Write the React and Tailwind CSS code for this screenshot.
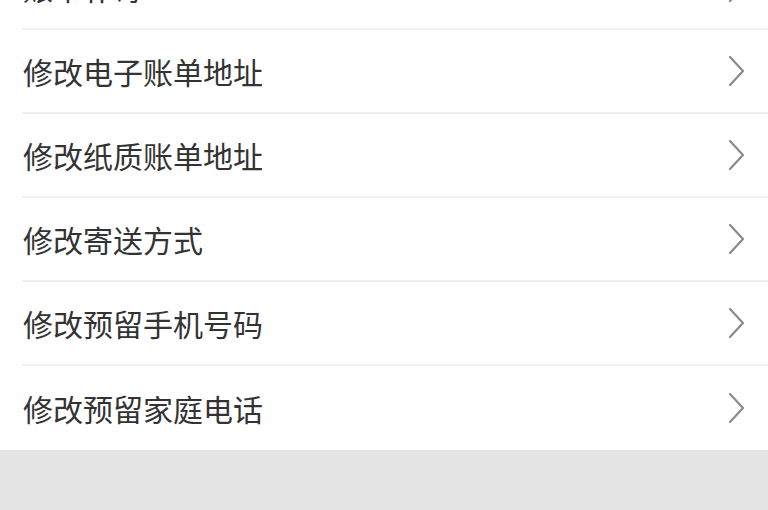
export default function App() {
  const items = [
    "账单补寄",
    "修改电子账单地址",
    "修改纸质账单地址",
    "修改寄送方式",
    "修改预留手机号码",
    "修改预留家庭电话",
  ];
  return (
    <div className="w-[768px] h-[510px] overflow-hidden bg-[#e5e5e5]" style={{ fontFamily: '"Noto Sans CJK SC", "Noto Sans", sans-serif' }}>
      <div className="mt-[-54px] bg-white">
        {items.map((t, i) => (
          <div key={i} className="pl-[22px]">
            <div className={`flex items-center justify-between h-[84px] pr-[22px] ${i < items.length - 1 ? "border-b-2 border-[#f0f0f0]" : ""}`}>
              <span className="text-[30px] leading-none text-[#333333] pl-px">{t}</span>
              <svg width="18" height="32" viewBox="0 0 18 32" className="mr-[0px]">
                <path d="M2 2 L15 16 L2 30" fill="none" stroke="#8a8a8a" strokeWidth="2.2" strokeLinecap="round" strokeLinejoin="round" />
              </svg>
            </div>
          </div>
        ))}
      </div>
    </div>
  );
}
